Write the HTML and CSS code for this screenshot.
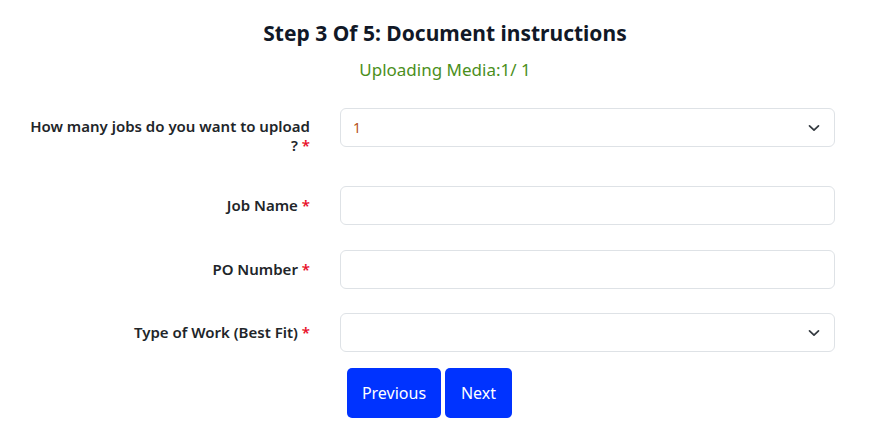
FILE: index.html
```html
<!DOCTYPE html>
<html>
<head>
<meta charset="utf-8">
<link rel="stylesheet" href="styles.css">
</head>
<body>
<div class="page">
  <h1 class="title">Step 3 Of 5: Document instructions</h1>
  <p class="subtitle">Uploading Media:1/ 1</p>
  <form class="form">
    <div class="row row-first">
      <label class="label">How many jobs do you want to upload ?&nbsp;<span class="req">*</span></label>
      <div class="field">
        <div class="select"><span class="value">1</span>
          <svg class="chev" width="12" height="8" viewBox="0 0 12 8"><path d="M1.5 1.8 6 6.2 10.5 1.8" fill="none" stroke="#343a40" stroke-width="1.7" stroke-linecap="round" stroke-linejoin="round"/></svg>
        </div>
      </div>
    </div>
    <div class="row row-job">
      <label class="label">Job Name <span class="req">*</span></label>
      <div class="field"><div class="input"></div></div>
    </div>
    <div class="row row-po">
      <label class="label">PO Number <span class="req">*</span></label>
      <div class="field"><div class="input"></div></div>
    </div>
    <div class="row row-type">
      <label class="label">Type of Work (Best Fit) <span class="req">*</span></label>
      <div class="field">
        <div class="select"><span class="value"></span>
          <svg class="chev" width="12" height="8" viewBox="0 0 12 8"><path d="M1.5 1.8 6 6.2 10.5 1.8" fill="none" stroke="#343a40" stroke-width="1.7" stroke-linecap="round" stroke-linejoin="round"/></svg>
        </div>
      </div>
    </div>
    <div class="actions">
      <button type="button" class="btn btn-prev">Previous</button>
      <button type="button" class="btn btn-next">Next</button>
    </div>
  </form>
</div>
</body>
</html>
```
FILE: styles.css
```css
* { box-sizing: border-box; }
html, body { margin: 0; padding: 0; background: #fff; }
body { font-family: "Noto Sans", "Open Sans", sans-serif; color: #212529; }
.page { width: 872px; padding-top: 19px; }
.title {
  margin: 0;
  text-align: center;
  font-size: 21px;
  line-height: 28px;
  font-weight: 700;
  color: #111827;
  padding-left: 18px;
}
.subtitle {
  margin: 11px 0 0;
  text-align: center;
  font-size: 17px;
  line-height: 24px;
  color: #4b8f1c;
  padding-left: 18px;
}
.form { margin-top: 26px; }
.row {
  display: flex;
  align-items: center;
}
.row-first { margin-bottom: 31px; align-items: flex-start; }
.row-first .label { padding-top: 9px; }
.row-job { margin-bottom: 25px; }
.row-po { margin-bottom: 24px; }
.label {
  width: 310px;
  padding-left: 28px;
  text-align: right;
  font-size: 15px;
  line-height: 19px;
  font-weight: 600;
  color: #212529;
}
.req { color: #e8102a; }
.field { margin-left: 30px; width: 495px; }
.input, .select {
  height: 39px;
  border: 1px solid #dee2e6;
  border-radius: 6px;
  background: #fff;
}
.select {
  display: flex;
  align-items: center;
  justify-content: space-between;
  padding: 0 14px 0 12px;
}
.value { font-size: 14px; color: #b5501a; }
.chev { display: block; }
.actions {
  display: flex;
  gap: 4px;
  padding-left: 347px;
  margin-top: 16px;
}
.btn {
  height: 50px;
  border: 0;
  border-radius: 5px;
  background: #0033ff;
  color: #fff;
  font-family: inherit;
  font-size: 16px;
  padding: 0;
}
.btn-prev { width: 94px; }
.btn-next { width: 67px; }
```
